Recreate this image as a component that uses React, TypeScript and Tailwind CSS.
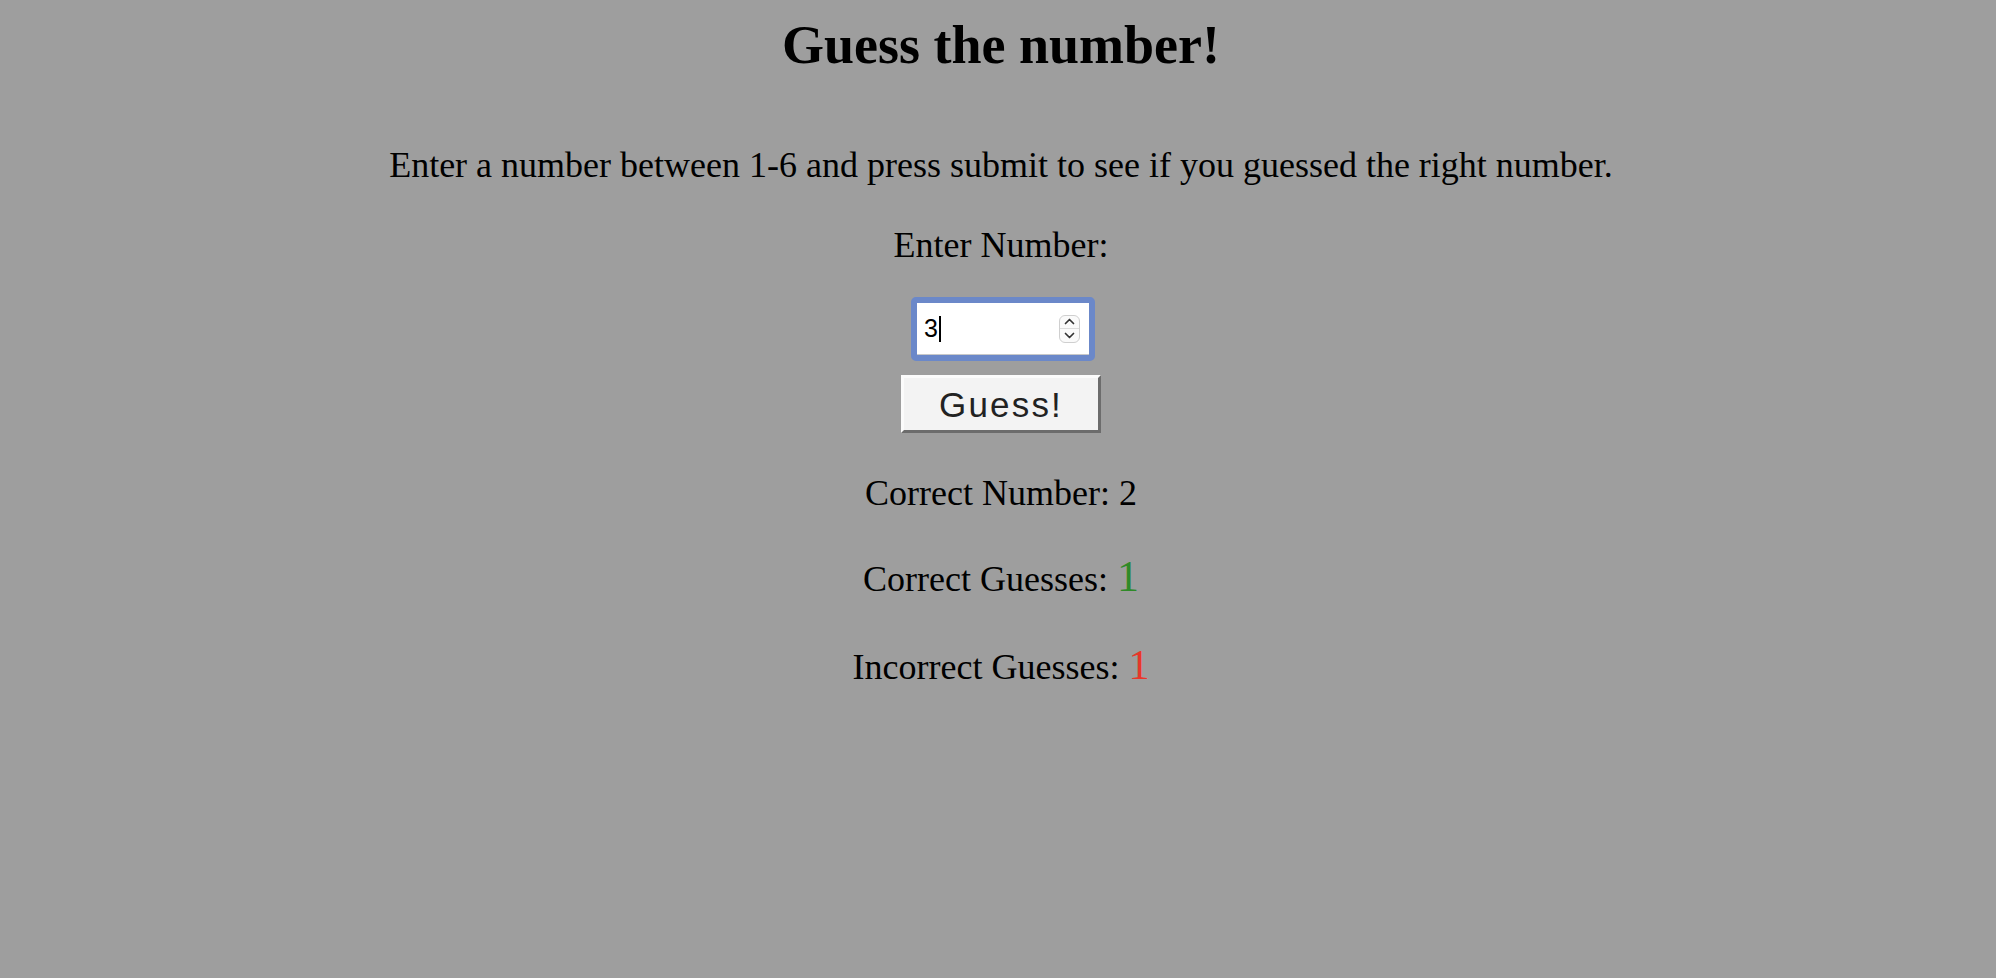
import React from "react";

const serif = "font-['Liberation_Serif',_'Times_New_Roman',_serif]";
const sans = "font-['Liberation_Sans',_Arial,_sans-serif]";

const Spinner = () => (
  <div className="mr-[9px] flex h-[28px] w-[21px] flex-col overflow-hidden rounded-[6px] border border-[#cfcfcf] bg-[#fafafa]">
    <div className="flex flex-1 items-center justify-center border-b border-[#dcdcdc]">
      <svg width="11" height="7" viewBox="0 0 11 7" fill="none">
        <path d="M1.5 5.5 L5.5 1.5 L9.5 5.5" stroke="#333" strokeWidth="1.7" strokeLinecap="round" strokeLinejoin="round" />
      </svg>
    </div>
    <div className="flex flex-1 items-center justify-center">
      <svg width="11" height="7" viewBox="0 0 11 7" fill="none">
        <path d="M1.5 1.5 L5.5 5.5 L9.5 1.5" stroke="#333" strokeWidth="1.7" strokeLinecap="round" strokeLinejoin="round" />
      </svg>
    </div>
  </div>
);

export default function App() {
  const correctNumber = 2;
  const correctGuesses = 1;
  const incorrectGuesses = 1;

  return (
    <div className={`min-h-screen w-full bg-[#9e9e9e] pl-[6px] text-black ${serif}`}>
      <div className="flex flex-col items-center pt-[18px]">
        <h1 className="text-[54px] font-bold leading-none">Guess the number!</h1>
        <p className="mt-[75px] text-[36px] leading-none">
          Enter a number between 1-6 and press submit to see if you guessed the right number.
        </p>
        <label className="mt-[44px] text-[36px] leading-none">Enter Number:</label>

        <div className="ml-[4px] mt-[34px] h-[64px] w-[184px] rounded-[5px] border-[6px] border-[#6b88c9]">
          <div className={`flex h-full items-center border-b border-[#c8c8c8] bg-white pl-[7px] ${sans}`}>
            <span className="text-[25px] leading-none">3</span>
            <div className="ml-[1px] h-[26px] w-[2px] bg-black" />
            <div className="flex-1" />
            <Spinner />
          </div>
        </div>

        <button
          type="button"
          className={`mt-[14px] flex h-[58px] w-[200px] items-center justify-center border-[3px] border-t-[#fbfbfb] border-l-[#fbfbfb] border-r-[#6c6c6c] border-b-[#6c6c6c] bg-[#f3f3f3] text-[35px] leading-none tracking-[2.2px] text-[#222] ${sans}`}>
          Guess!
        </button>

        <div className="mt-[42px] text-[36px] leading-none">Correct Number: {correctNumber}</div>
        <div className="mt-[50px] text-[36px] leading-none">
          Correct Guesses: <span className="text-[44px] leading-[0] text-[#2f8a28]">{correctGuesses}</span>
        </div>
        <div className="mt-[52px] text-[36px] leading-none">
          Incorrect Guesses: <span className="text-[42px] leading-[0] text-[#e8362a]">{incorrectGuesses}</span>
        </div>
      </div>
    </div>
  );
}
